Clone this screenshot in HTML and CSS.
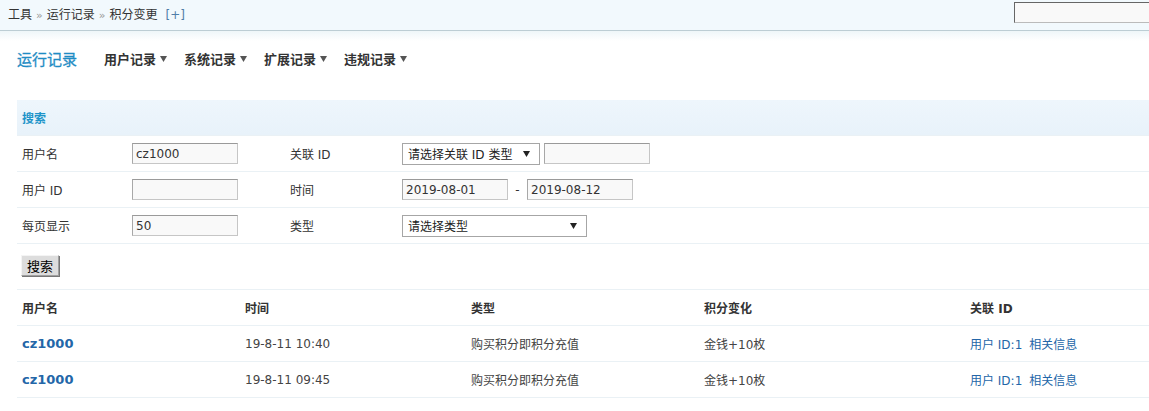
FILE: index.html
```html
<!DOCTYPE html>
<html lang="zh-CN">
<head>
<meta charset="utf-8">
<title>积分变更</title>
<link rel="stylesheet" href="styles.css">
</head>
<body>
<div class="topbar">
  <div class="crumb">工具<span class="sep">&raquo;</span>运行记录<span class="sep">&raquo;</span>积分变更<a class="plus" href="#">[+]</a></div>
  <input class="quick" type="text">
</div>
<div class="fade"></div>
<div class="itemtitle">
  <h3>运行记录</h3>
  <ul class="tabs">
    <li><span>用户记录</span><svg class="arr" width="7" height="6" viewBox="0 0 7 6"><path d="M0 0H7L3.5 6Z" fill="#555"/></svg></li>
    <li><span>系统记录</span><svg class="arr" width="7" height="6" viewBox="0 0 7 6"><path d="M0 0H7L3.5 6Z" fill="#555"/></svg></li>
    <li><span>扩展记录</span><svg class="arr" width="7" height="6" viewBox="0 0 7 6"><path d="M0 0H7L3.5 6Z" fill="#555"/></svg></li>
    <li><span>违规记录</span><svg class="arr" width="7" height="6" viewBox="0 0 7 6"><path d="M0 0H7L3.5 6Z" fill="#555"/></svg></li>
  </ul>
</div>
<table class="tb form">
  <colgroup><col class="c1"><col class="c2"><col class="c3"><col></colgroup>
  <tr class="partition"><th colspan="4">搜索</th></tr>
  <tr>
    <td>用户名</td><td><input class="txt" type="text" value="cz1000"></td>
    <td>关联 ID</td>
    <td><span class="sel sel1">请选择关联 ID 类型<svg class="sarr" width="7" height="6" viewBox="0 0 7 6"><path d="M0 0H7L3.5 6Z" fill="#222"/></svg></span><input class="txt wide" type="text"></td>
  </tr>
  <tr>
    <td>用户 ID</td><td><input class="txt" type="text"></td>
    <td>时间</td>
    <td><input class="txt" type="text" value="2019-08-01"><span class="dash">-</span><input class="txt" type="text" value="2019-08-12"></td>
  </tr>
  <tr>
    <td>每页显示</td><td><input class="txt" type="text" value="50"></td>
    <td>类型</td>
    <td><span class="sel sel2">请选择类型<svg class="sarr" width="7" height="6" viewBox="0 0 7 6"><path d="M0 0H7L3.5 6Z" fill="#222"/></svg></span></td>
  </tr>
  <tr class="btnrow"><td colspan="4"><button class="btn" type="button">搜索</button></td></tr>
</table>
<table class="tb list">
  <colgroup><col class="l1"><col class="l2"><col class="l3"><col class="l4"><col></colgroup>
  <tr class="header"><th>用户名</th><th>时间</th><th>类型</th><th>积分变化</th><th>关联 ID</th></tr>
  <tr><td><a class="user" href="#">cz1000</a></td><td>19-8-11 10:40</td><td>购买积分即积分充值</td><td>金钱+10枚</td><td><a href="#">用户 ID:1</a><a class="rel" href="#">相关信息</a></td></tr>
  <tr><td><a class="user" href="#">cz1000</a></td><td>19-8-11 09:45</td><td>购买积分即积分充值</td><td>金钱+10枚</td><td><a href="#">用户 ID:1</a><a class="rel" href="#">相关信息</a></td></tr>
  <tr class="last"><td><a class="user" href="#">cz1000</a></td><td>19-8-10 18:02</td><td>管理员后台修改积分</td><td>金钱+10枚</td><td><a href="#">用户 ID:1</a><a class="rel" href="#">相关信息</a></td></tr>
</table>
</body>
</html>
```
FILE: styles.css
```css
html, body {
  margin: 0;
  padding: 0;
  background: #fff;
}
body {
  font-family: "DejaVu Sans", "Noto Sans CJK SC", sans-serif;
  font-size: 12px;
  color: #333;
  overflow: hidden;
}
a {
  color: #2366a8;
  text-decoration: none;
}
.topbar {
  height: 30px;
  background: #f2f9fd;
  border-bottom: 1px solid #bccdd4;
  display: flex;
  justify-content: space-between;
  align-items: flex-start;
}
.crumb {
  padding-left: 8px;
  line-height: 31px;
  color: #333;
  white-space: nowrap;
}
.crumb .sep {
  color: #999;
  margin: 0 4px;
  font-size: 11px;
}
.crumb .plus {
  margin-left: 8px;
  color: #4f7ea8;
}
.quick {
  width: 142px;
  height: 21px;
  box-sizing: border-box;
  margin: 2px -7px 0 0;
  border: 1px solid #bbb;
  border-top-color: #666;
  border-left-color: #666;
  background: #f9f9f9;
  flex: none;
}
.fade {
  height: 10px;
  background: linear-gradient(#eef6f9, #fff);
}
.itemtitle {
  display: flex;
  align-items: center;
  height: 34px;
  padding-left: 17px;
}
.itemtitle h3 {
  margin: 0 27px 0 0;
  font-size: 15px;
  font-weight: normal;
  color: #1f8cc4;
  -webkit-text-stroke: 0.3px #1f8cc4;
}
.tabs {
  display: flex;
  margin: 0;
  padding: 0;
  list-style: none;
}
.tabs li {
  display: flex;
  align-items: center;
  width: 80px;
  font-weight: bold;
  font-size: 13px;
  color: #333;
}
.tabs .arr {
  margin: 2px 0 0 4px;
}
.tb {
  border-collapse: collapse;
  table-layout: fixed;
  margin-left: 17px;
  width: 1132px;
}
.form {
  margin-top: 25px;
}
.c1 { width: 110px; }
.c2 { width: 158px; }
.c3 { width: 112px; }
.tb td, .tb th {
  height: 35px;
  padding: 0 5px;
  text-align: left;
  vertical-align: middle;
  border-top: 1px solid #eaf1f5;
  white-space: nowrap;
}
.partition th {
  height: 35px;
  border-top: none;
  background: linear-gradient(#eef6fc, #e8f2fa);
  color: #1e94c9;
  font-weight: bold;
  font-size: 12px;
}
.txt {
  width: 106px;
  height: 21px;
  box-sizing: border-box;
  border: 1px solid #c6c6c6;
  border-top-color: #9a9a9a;
  border-left-color: #a8a8a8;
  background: #f9f9f9;
  font-family: "DejaVu Sans", "Noto Sans CJK SC", sans-serif;
  font-size: 12px;
  color: #333;
  padding: 0 3px;
  margin: 0;
  vertical-align: middle;
}
.txt.wide {
  margin-left: 4px;
}
.dash {
  display: inline-block;
  width: 19px;
  text-align: center;
  vertical-align: middle;
}
.sel {
  display: inline-flex;
  align-items: center;
  justify-content: space-between;
  box-sizing: border-box;
  height: 22px;
  padding: 0 9px 0 5px;
  border: 1px solid #a6a6a6;
  background: #fff;
  color: #222;
  vertical-align: middle;
}
.sel1 { width: 138px; }
.sel2 { width: 185px; }
.btnrow td {
  height: 45px;
  padding: 0 4px;
}
.btn {
  width: 38px;
  height: 21px;
  padding: 0;
  margin: -2px 0 0 0;
  background: #ddd;
  border: 1px solid #a0a0a0;
  border-top-color: #f4f4f4;
  border-left-color: #f4f4f4;
  box-shadow: 1px 1px 0 #777;
  font-family: "Noto Sans CJK SC", sans-serif;
  font-size: 13px;
  color: #000;
  line-height: 19px;
}
.l1 { width: 223px; }
.l2 { width: 226px; }
.l3 { width: 233px; }
.l4 { width: 266px; }
.list .header th {
  font-weight: bold;
  color: #333;
}
.list td {
  color: #444;
}
.list .last td {
  padding-top: 4px;
}
.user {
  font-weight: bold;
  font-size: 13px;
  color: #2366a8;
}
.rel {
  margin-left: 7px;
}
```
